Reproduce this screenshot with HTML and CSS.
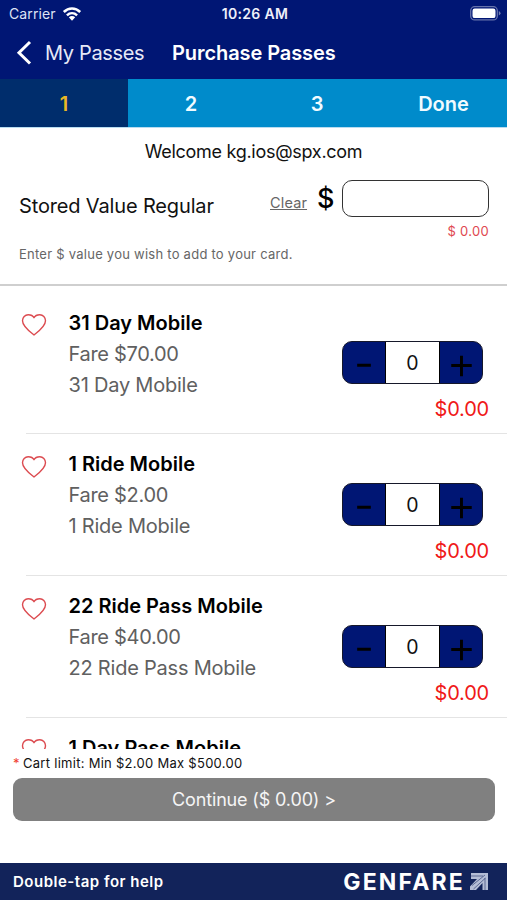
FILE: index.html
```html
<!DOCTYPE html>
<html lang="en">
<head>
<meta charset="utf-8">
<title>Purchase Passes</title>
<link rel="stylesheet" href="styles.css">
</head>
<body>
<svg width="0" height="0" class="defs">
  <symbol id="heart" viewBox="0 0 26 24"><path d="M13 22 C9 18.800 1.500 13.500 1.500 7.800 C1.500 4.300 4 1.700 7.200 1.700 C9.900 1.700 12 2.700 13 4.700 C14 2.700 16.100 1.700 18.800 1.700 C22 1.700 24.500 4.300 24.500 7.800 C24.500 13.500 17 18.800 13 22 Z" fill="none" stroke="#dc4b50" stroke-width="1.400" stroke-linejoin="round"/></symbol>
  <symbol id="minus" viewBox="0 0 42 42"><path d="M14 23.800 H28" stroke="#000" stroke-width="3"/></symbol>
  <symbol id="plus" viewBox="0 0 42 42"><path d="M11 24 H32 M21.500 14 V35" stroke="#000" stroke-width="3"/></symbol>
</svg>
<div class="screen">
  <header>
    <div class="status">
      <span class="carrier"><span class="carrier-name">Carrier</span>
        <svg width="20" height="16" viewBox="0 0 20 16" fill="none" stroke="#fff" stroke-width="2.500"><path d="M1.800 6 C6.500 1.300 13.500 1.300 18.200 6"/><path d="M4.900 9.300 C7.900 6.500 12.100 6.500 15.100 9.300"/><path d="M6.800 11.300 Q10 8.700 13.200 11.300 L10 14.700 Z" fill="#fff" stroke="none"/></svg>
      </span>
      <span class="time">10:26 AM</span>
      <svg class="battery" width="31" height="15" viewBox="0 0 31 15"><rect x=".7" y=".7" width="26.600" height="13.200" rx="4" fill="none" stroke="#fff" stroke-opacity=".4" stroke-width="1.300"/><rect x="2.500" y="2.500" width="23" height="9.600" rx="2.200" fill="#fff"/><path d="M28.800 5 Q30.500 5.800 30.500 7.300 T28.800 9.600 Z" fill="#fff" fill-opacity=".45"/></svg>
    </div>
    <nav>
      <svg width="16" height="26" viewBox="0 0 16 26"><path d="M14 2 L3 12.700 L14 23.500" fill="none" stroke="#fff" stroke-width="3"/></svg>
      <span class="back">My Passes</span>
      <span class="heading">Purchase Passes</span>
    </nav>
  </header>
  <div class="steps"><div class="on">1</div><div>2</div><div>3</div><div>Done</div></div>
  <div class="welcome"><span>Welcome kg.ios@spx.com</span></div>
  <section class="stored">
    <div class="value-row">
      <span class="label">Stored Value Regular</span>
      <span class="clear">Clear</span>
      <span class="dollar">$</span>
      <span class="amount"></span>
    </div>
    <div class="subtotal"><span>$ 0.00</span></div>
    <div class="hint"><span>Enter $ value you wish to add to your card.</span></div>
  </section>
  <main>
    <article>
      <svg class="heart"><use href="#heart"/></svg>
      <div class="info"><h2>31 Day Mobile</h2><p class="fare">Fare $70.00</p><p>31 Day Mobile</p></div>
      <div class="buy"><div class="stepper"><svg><use href="#minus"/></svg><b>0</b><svg><use href="#plus"/></svg></div><span class="price">$0.00</span></div>
    </article>
    <article>
      <svg class="heart"><use href="#heart"/></svg>
      <div class="info"><h2>1 Ride Mobile</h2><p class="fare">Fare $2.00</p><p>1 Ride Mobile</p></div>
      <div class="buy"><div class="stepper"><svg><use href="#minus"/></svg><b>0</b><svg><use href="#plus"/></svg></div><span class="price">$0.00</span></div>
    </article>
    <article>
      <svg class="heart"><use href="#heart"/></svg>
      <div class="info"><h2>22 Ride Pass Mobile</h2><p class="fare">Fare $40.00</p><p>22 Ride Pass Mobile</p></div>
      <div class="buy"><div class="stepper"><svg><use href="#minus"/></svg><b>0</b><svg><use href="#plus"/></svg></div><span class="price">$0.00</span></div>
    </article>
    <article>
      <svg class="heart"><use href="#heart"/></svg>
      <div class="info"><h2>1 Day Pass Mobile</h2></div>
    </article>
  </main>
  <div class="limit"><i>*</i><span>Cart limit: Min $2.00 Max $500.00</span></div>
  <div class="continue"><span>Continue ($ 0.00) &gt;</span></div>
  <footer>
    <span class="help">Double-tap for help</span>
    <span class="brand">GENFARE</span>
    <svg width="18" height="17" viewBox="0 0 18 17"><path d="M1 0 H18 V17 H12.500 V10 L6 17 H0 V13.500 L7 6 H1 Z" fill="#b4bdd6"/><path d="M1 3 H13 M2 12.500 L15 2 M3.500 16 L15.500 5 M15 5 V17" fill="none" stroke="#12235a" stroke-opacity=".6" stroke-width=".9"/></svg>
  </footer>
</div>
</body>
</html>
```

FILE: styles.css
```css
* { box-sizing: border-box; }
body { margin: 0; font-family: Inter, "Liberation Sans", sans-serif; color: #111; background: #fff; }
span { white-space: nowrap; }
.defs { display: block; }
.screen { width: 507px; height: 900px; display: flex; flex-direction: column; overflow: hidden; }
header { height: 79px; flex: none; background: #001674; color: #fff; }
.status { height: 27px; display: grid; grid-template-columns: 1fr auto 1fr; align-items: center; padding: 0 6px 0 9px; font-size: 14px; }
.carrier { display: flex; align-items: center; gap: 6px; color: #dfe3f4; }
.carrier-name { letter-spacing: .1px; }
.time { font-weight: 600; color: #eef0fa; letter-spacing: .35px; }
.battery { justify-self: end; }
nav { height: 51px; display: flex; align-items: center; padding-left: 16px; font-size: 20px; }
.back { margin-left: 13px; width: 127px; color: #e6e9f7; letter-spacing: -.35px; }
.heading { font-weight: 600; letter-spacing: -.08px; }
.steps { height: 49px; flex: none; display: grid; grid-template-columns: 128px 126px 126px 127px; background: #008bcb; border-bottom: 1px solid #b8dcf0; color: #f1fbff; font-size: 20px; font-weight: 600; line-height: 50px; text-align: center; }
.steps div { height: 48px; }
.steps .on { background: #002d6c; color: #e9b824; }
.welcome { height: 48px; flex: none; line-height: 47px; text-align: center; font-size: 18px; letter-spacing: -.28px; }
.stored { height: 110px; flex: none; border-bottom: 2px solid #cfcfcf; padding: 4px 18px 0 19px; }
.value-row { height: 37px; display: flex; align-items: center; }
.label { font-size: 20px; width: 251px; padding-top: 14px; letter-spacing: -.15px; }
.clear { font-size: 14.500px; color: #666; text-decoration: underline; width: 47px; padding-top: 8px; letter-spacing: .15px; }
.dollar { font-size: 27px; font-weight: 500; color: #000; width: 25px; }
.amount { flex: 1; height: 37px; border: 1.500px solid #333; border-radius: 10px; }
.subtotal { text-align: right; font-size: 13px; line-height: 28px; height: 28px; color: #e04850; letter-spacing: .3px; }
.hint { font-size: 13px; color: #666; line-height: 18px; letter-spacing: .25px; }
main { height: 463px; flex: none; overflow: hidden; padding-top: 6px; }
article { height: 141.750px; display: flex; padding-left: 21px; background: linear-gradient(#e4e4e4, #e4e4e4) 26px 141px / 481px 1px no-repeat; }
.heart { width: 26px; height: 24px; margin-top: 21px; flex: none; }
.info { margin-left: 21.500px; padding-top: 15.700px; flex: 1; }
h2, p { margin: 0; font-size: 20px; line-height: 31px; font-weight: 400; color: #606060; letter-spacing: -.22px; }
.fare { letter-spacing: -.3px; }
h2 { font-weight: 600; color: #000; letter-spacing: 0; }
.buy { width: 147px; margin-right: 18px; padding-top: 49px; flex: none; display: flex; flex-direction: column; }
.stepper { width: 141px; height: 43px; border: 1.500px solid #16182a; border-radius: 10px; background: #001674; display: flex; overflow: hidden; }
.stepper svg { width: 42px; height: 41px; flex: none; }
.stepper b { flex: 1; background: #fff; border: solid #000; border-width: 0 1px; text-align: center; font-weight: 400; font-size: 19.500px; line-height: 43px; }
.price { align-self: flex-end; font-size: 20px; line-height: 24px; margin-top: 13px; color: #f01818; letter-spacing: -.2px; }
.limit { height: 29px; flex: none; padding-left: 13px; font-size: 13px; line-height: 29px; letter-spacing: .28px; display: flex; }
.limit i { color: #f04030; font-style: normal; width: 10px; }
.continue { height: 43px; flex: none; margin: 0 12px 0 13px; background: #808080; border-radius: 9px; color: #f5f5f5; font-size: 18px; line-height: 44px; text-align: center; letter-spacing: -.15px; }
footer { height: 37px; margin-top: auto; flex: none; background: #12235a; color: #fff; display: flex; align-items: center; padding: 0 19px 0 13px; }
.help { font-size: 15px; font-weight: 600; flex: 1; letter-spacing: .5px; }
.brand { font-size: 23px; font-weight: 700; letter-spacing: 2.200px; margin-right: 5px; }
```
